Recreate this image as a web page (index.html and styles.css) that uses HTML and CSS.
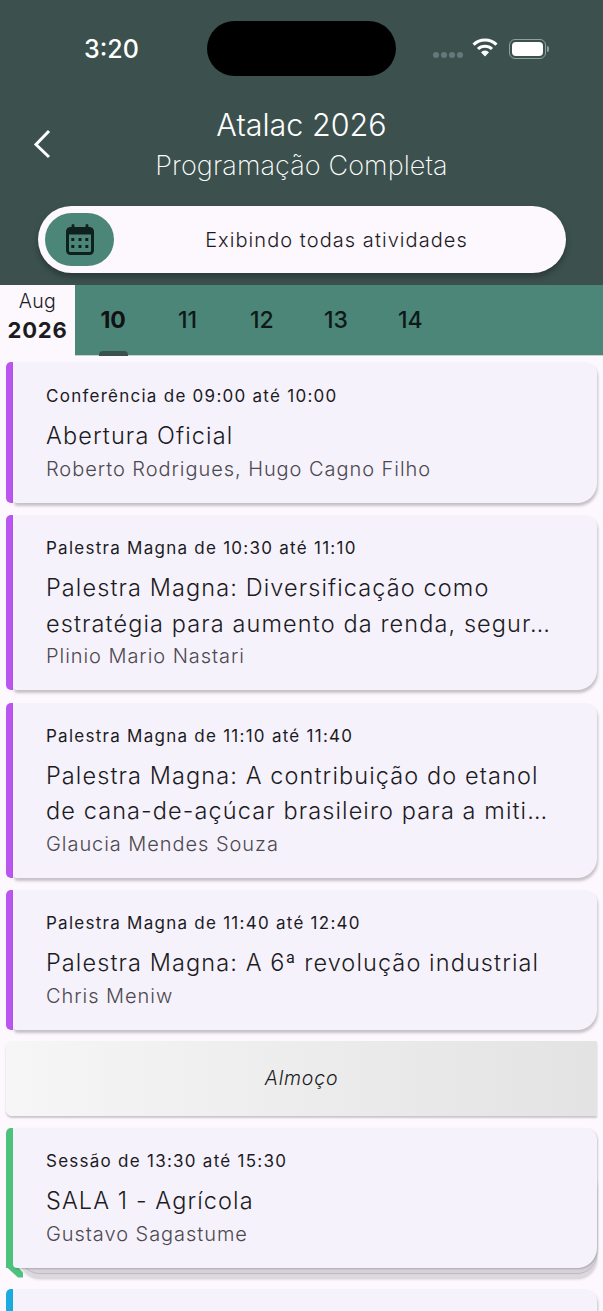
FILE: index.html
```html
<!DOCTYPE html>
<html lang="en">
<head>
  <meta charset="UTF-8" />
  <meta name="viewport" content="width=device-width, initial-scale=1.0"/>
  <title>Atalac 2026</title>
  <link rel="stylesheet" href="styles.css">
</head>
<body>

  <header class="header">
    <div class="status">
      <span class="clock">3:20</span>
      <div class="island"></div>
      <div class="status-icons">
        <div class="signal"><i></i><i></i><i></i><i></i></div>
        <svg class="wifi" width="26" height="19" viewBox="0 0 26 19">
          <path d="M1.5 6.6A16.5 16.5 0 0 1 24.500 6.600" fill="none" stroke="#fff" stroke-width="3"/>
          <path d="M6 11A10 10 0 0 1 20 11" fill="none" stroke="#fff" stroke-width="3"/>
          <path d="M9 14.200A5.800 5.800 0 0 1 17 14.200L13 18.500Z" fill="#fff"/>
        </svg>
        <div class="battery"><div class="battery-fill"></div></div>
        <div class="battery-cap"></div>
      </div>
    </div>

    <div class="title-row">
      <svg class="back" width="20" height="30" viewBox="0 0 20 30">
        <path d="M17 2L4 15.500L17 28" fill="none" stroke="#fff" stroke-width="3"/>
      </svg>
      <h1>Atalac 2026</h1>
      <p>Programação Completa</p>
    </div>

    <div class="filter">
      <div class="filter-icon">
        <svg width="28" height="31" viewBox="0 0 28 31">
          <path d="M7 1.500v4M21 1.500v4" stroke="#10201e" stroke-width="3" stroke-linecap="round"/>
          <rect x="1.500" y="4.500" width="25" height="25" rx="3" fill="none" stroke="#10201e" stroke-width="3"/>
          <rect x="1.500" y="4.500" width="25" height="6" fill="#10201e"/>
          <g fill="#10201e">
            <rect x="5.300" y="14" width="3" height="3"/><rect x="12.500" y="14" width="3" height="3"/><rect x="19.300" y="14" width="3" height="3"/>
            <rect x="5.300" y="21" width="3" height="3"/><rect x="12.500" y="21" width="3" height="3"/><rect x="19.300" y="21" width="3" height="3"/>
          </g>
        </svg>
      </div>
      <span class="filter-label">Exibindo todas atividades</span>
    </div>
  </header>

  <nav class="dates">
    <div class="month">
      <span class="month-name">Aug</span>
      <span class="month-year">2026</span>
    </div>
    <div class="days">
      <span class="day active">10</span>
      <span class="day">11</span>
      <span class="day">12</span>
      <span class="day">13</span>
      <span class="day">14</span>
    </div>
  </nav>

  <main class="list">
    <article class="card purple">
      <div class="stripe"></div>
      <div class="card-body">
        <div class="meta">Conferência de 09:00 até 10:00</div>
        <div class="name">Abertura Oficial</div>
        <div class="people">Roberto Rodrigues, Hugo Cagno Filho</div>
      </div>
    </article>

    <article class="card purple">
      <div class="stripe"></div>
      <div class="card-body">
        <div class="meta">Palestra Magna de 10:30 até 11:10</div>
        <div class="name">Palestra Magna: Diversificação como<br>estratégia para aumento da renda, segur…</div>
        <div class="people">Plinio Mario Nastari</div>
      </div>
    </article>

    <article class="card purple">
      <div class="stripe"></div>
      <div class="card-body">
        <div class="meta">Palestra Magna de 11:10 até 11:40</div>
        <div class="name">Palestra Magna: A contribuição do etanol<br>de cana-de-açúcar brasileiro para a miti…</div>
        <div class="people">Glaucia Mendes Souza</div>
      </div>
    </article>

    <article class="card purple">
      <div class="stripe"></div>
      <div class="card-body">
        <div class="meta">Palestra Magna de 11:40 até 12:40</div>
        <div class="name">Palestra Magna: A 6ª revolução industrial</div>
        <div class="people">Chris Meniw</div>
      </div>
    </article>

    <div class="break">Almoço</div>

    <article class="card green stacked">
      <div class="stripe"></div>
      <div class="card-body">
        <div class="meta">Sessão de 13:30 até 15:30</div>
        <div class="name">SALA 1 - Agrícola</div>
        <div class="people">Gustavo Sagastume</div>
      </div>
    </article>

    <article class="card blue">
      <div class="stripe"></div>
      <div class="card-body empty"></div>
    </article>
  </main>

</body>
</html>
```

FILE: styles.css
```css
* { margin: 0; padding: 0; box-sizing: border-box; }
html, body {
  height: 1311px;
  overflow: hidden;
  font-family: 'Inter', sans-serif;
  background: #fdf7fe;
  color: #1c1b1f;
}

/* Header */
.header {
  height: 285px;
  background: #3c514e;
  color: #fff;
  padding: 21px 38px 0;
}
.status {
  height: 55px;
  display: flex;
  align-items: center;
  position: relative;
}
.clock {
  position: absolute;
  left: 46px;
  top: 13px;
  font-size: 25px;
  font-weight: 500;
  line-height: 30px;
}
.island {
  width: 189px;
  height: 55px;
  margin-left: 169px;
  border-radius: 28px;
  background: #000;
}
.status-icons {
  display: flex;
  align-items: center;
  margin-left: 37px;
}
.signal {
  display: flex;
  gap: 2px;
  margin-top: 12px;
}
.signal i {
  width: 6px;
  height: 6px;
  border-radius: 50%;
  background: #64797a;
}
.wifi { margin-left: 9px; margin-bottom: 2px; }
.battery {
  width: 37px;
  height: 20px;
  margin-left: 11px;
  padding: 2px;
  border: 1px solid #90a09e;
  border-radius: 6px;
}
.battery-fill {
  height: 100%;
  background: #fff;
  border-radius: 4px;
}
.battery-cap {
  width: 2px;
  height: 6px;
  margin-left: 1px;
  border-radius: 0 2px 2px 0;
  background: #90a09e;
}

.title-row {
  position: relative;
  margin: 30px -38px 0;
  text-align: center;
}
.back {
  position: absolute;
  left: 32px;
  top: 23px;
}
.title-row h1 {
  font-size: 30.500px;
  font-weight: 300;
  line-height: 38px;
}
.title-row p {
  font-size: 27px;
  font-weight: 250;
  line-height: 44px;
  letter-spacing: 0.1px;
}

.filter {
  height: 67px;
  margin-top: 18px;
  width: 528px;
  border-radius: 34px;
  background: #fdf7fe;
  display: flex;
  align-items: center;
  padding: 0 7px;
  box-shadow: 0 4px 6px rgba(0,0,0,0.3);
}
.filter-icon {
  width: 69px;
  height: 53px;
  border-radius: 27px;
  background: #4b8679;
  display: flex;
  align-items: center;
  justify-content: center;
}
.filter-label {
  flex: 1;
  text-align: center;
  font-size: 20px;
  font-weight: 350;
  letter-spacing: 1.06px;
  color: #1c1b1f;
}

/* Date strip */
.dates {
  height: 71px;
  display: flex;
}
.month {
  width: 75px;
  display: flex;
  flex-direction: column;
  align-items: center;
  padding-top: 3px;
}
.month-name { font-size: 19.500px; font-weight: 300; line-height: 26px; letter-spacing: 0.4px; }
.month-year { font-size: 22px; font-weight: 700; line-height: 32px; letter-spacing: 0.8px; }
.days {
  flex: 1;
  position: relative;
  display: flex;
  background: #4b8679;
  border-bottom: 1px solid #c8cfcd;
  padding: 20px 0 0 1px;
}
.day {
  width: 74.300px;
  text-align: center;
  font-size: 23px;
  font-weight: 500;
  line-height: 30px;
  color: #0e1a18;
}
.day.active { font-weight: 700; color: #111; }
.day.active::after {
  content: "";
  position: absolute;
  left: 24px;
  bottom: -1px;
  width: 29px;
  height: 5px;
  border-radius: 4px 4px 0 0;
  background: #3c514e;
}

/* Cards */
.list {
  padding: 6px 6px 0;
  display: flex;
  flex-direction: column;
  gap: 12.500px;
}
.card {
  display: flex;
  position: relative;
}
.stripe {
  width: 7px;
  flex: none;
  border-radius: 5px 0 0 5px;
}
.purple .stripe { background: #bb55f0; }
.green .stripe { background: #4cc27c; }
.blue .stripe { background: #1cabe0; }
.card-body {
  flex: 1;
  position: relative;
  z-index: 1;
  background: #f6f2fb;
  border-radius: 0 12px 20px 4px;
  padding: 21px 33px 19px 33px;
  box-shadow: 1px 3px 3px rgba(0,0,0,0.22);
}
.card:first-child .card-body {
  padding-top: 22px;
  padding-bottom: 19px;
}
.meta {
  font-size: 17px;
  font-weight: 370;
  line-height: 24px;
  letter-spacing: 1.26px;
  color: #1c1b1f;
}
.name {
  margin-top: 10px;
  font-size: 23.500px;
  font-weight: 350;
  line-height: 35.500px;
  letter-spacing: 1.1px;
  color: #1c1b1f;
  white-space: nowrap;
}
.people {
  font-size: 20px;
  font-weight: 350;
  line-height: 30px;
  letter-spacing: 0.95px;
  color: #4c4950;
}
.card-body.empty { height: 120px; }

.break {
  height: 75px;
  margin-top: -1.500px;
  display: flex;
  align-items: center;
  justify-content: center;
  font-size: 19.500px;
  font-style: italic;
  font-weight: 300;
  letter-spacing: 0.8px;
  background: linear-gradient(90deg, #f6f6f6, #e3e3e3);
  border-radius: 6px 0 0 6px;
  box-shadow: 0 2px 2px rgba(0,0,0,0.2);
}

/* Session with several talks: sheets peeking out under the card */
.stacked {
  margin-bottom: 9px;
  isolation: isolate;
}
.stacked .card-body { box-shadow: 1px 1px 2px rgba(0,0,0,0.2); }
.stacked::before,
.stacked::after {
  content: "";
  position: absolute;
  left: 14px;
  right: 0;
  top: 40px;
  border-radius: 20px;
}
.stacked::before {
  bottom: -5px;
  background: #d6d2da;
  box-shadow: 0 1px 1px rgba(0,0,0,0.15);
  z-index: 0;
}
.stacked::after {
  bottom: -10px;
  background: #dcd8e0;
  box-shadow: 0 1px 3px rgba(0,0,0,0.2);
  z-index: -1;
}
.stacked .stripe {
  position: relative;
  border-radius: 5px 0 0 0;
}
.stacked .stripe::after {
  content: "";
  position: absolute;
  left: 0;
  bottom: -10px;
  width: 17px;
  height: 16px;
  background: #4cc27c;
  clip-path: polygon(0 0, 7px 0, 17px 11px, 17px 16px, 12px 16px, 0 5px);
}
```
